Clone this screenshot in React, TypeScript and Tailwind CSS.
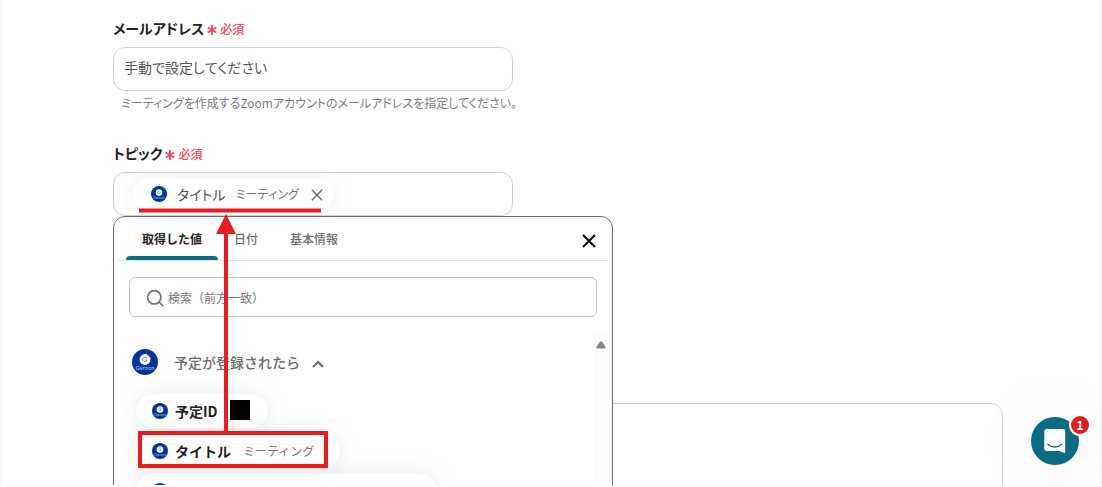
import React, { useState } from "react";

function GaroonLogo({ className }: { className: string }) {
  return (
    <svg viewBox="0 0 26 26" className={className} aria-hidden="true">
      <circle cx="13" cy="13" r="13" fill="#00349c" />
      <circle cx="13" cy="10.5" r="5.4" fill="#fff" />
      <path d="M14.700 9.100a2.200 2.200 0 1 0 .4 1.900h-1.800" fill="none" stroke="#5f80c4" strokeWidth="0.900" />
      <text x="13" y="20.6" fontSize="5.4" textAnchor="middle" fill="#a9bbe0" fontFamily="Inter, sans-serif">
        Garoon
      </text>
    </svg>
  );
}

function Cross({ className, width }: { className: string; width: number }) {
  return (
    <svg viewBox="0 0 14 14" className={className} fill="none" stroke="currentColor" strokeWidth={width} aria-hidden="true">
      <path d="M1 1l12 12M13 1L1 13" />
    </svg>
  );
}

function FieldLabel({ htmlFor, children }: { htmlFor: string; children: React.ReactNode }) {
  return (
    <label htmlFor={htmlFor} className="flex h-5 items-center text-sm font-bold text-[#222] [font-feature-settings:'palt']">
      {children}
      <svg viewBox="0 0 10 10" className="mt-1 ml-[3px] size-2.5" stroke="#ff4154" strokeWidth="1.8" fill="none" aria-hidden="true">
        <path d="M5 0v10M.7 2.5l8.6 5M9.3 2.5l-8.6 5" />
      </svg>
      <span className="mt-0.5 ml-[3px] text-xs font-medium text-[#ff4154]">必須</span>
    </label>
  );
}

const chipShadow = "shadow-[0_0_24px_rgba(0,0,0,0.08)]";

function ValueChip({ title, children }: { title: string; children?: React.ReactNode }) {
  return (
    <button
      type="button"
      className={`flex h-9 items-center rounded-full border border-[#f2f2f2] bg-white pr-[26px] pl-4 whitespace-nowrap ${chipShadow}`}
    >
      <GaroonLogo className="size-4 shrink-0" />
      <span className="ml-[7px] text-sm font-bold text-[#222]">{title}</span>
      {children}
    </button>
  );
}

const tabs = ["取得した値", "日付", "基本情報"];

function ValuePicker() {
  const [active, setActive] = useState(0);
  return (
    <section className="absolute top-full left-0 z-10 h-96 w-[500px] rounded-xl border border-[#6b6b6b] bg-white px-1">
      <div className="flex h-11 items-center border-b border-[#e2e2e2] pl-2">
        <div role="tablist" className="flex h-full">
          {tabs.map((tab, i) => (
            <button
              key={tab}
              type="button"
              role="tab"
              aria-selected={i === active}
              onClick={() => setActive(i)}
              className={
                i === active
                  ? "relative px-4 text-xs font-bold text-[#222] after:absolute after:inset-x-0 after:bottom-0 after:h-1 after:rounded-t after:bg-[#0a6c85]"
                  : "px-4 text-xs font-medium text-[#707070]"
              }
            >
              {tab}
            </button>
          ))}
        </div>
        <button type="button" aria-label="閉じる" className="mt-1 mr-3 ml-auto text-black">
          <Cross className="size-[14px]" width={2} />
        </button>
      </div>
      <div className="mx-[11px] mt-4 flex h-10 items-center rounded-md border border-[#c4c4c4] pl-4">
        <svg viewBox="0 0 18 18" className="mt-px size-[18px]" fill="none" stroke="#707070" strokeWidth="1.7" aria-hidden="true">
          <circle cx="8.3" cy="8.3" r="6.7" />
          <path d="M13 13l4 4" />
        </svg>
        <input
          type="search"
          aria-label="検索（前方一致）"
          placeholder="検索（前方一致）"
          className="mt-0.5 ml-1 min-w-0 flex-1 text-xs outline-none placeholder:text-[#757575]"
        />
      </div>
      <div className="mt-4 flex h-52 overflow-hidden">
        <div className="min-w-0 flex-1 pl-[14px]">
          <button type="button" aria-expanded="true" className="mt-4 flex h-[26px] items-center text-sm font-medium text-[#6b6b6b]">
            <GaroonLogo className="size-[26px]" />
            <span className="ml-4">予定が登録されたら</span>
            <svg viewBox="0 0 12 8" className="mt-1 ml-3 h-2 w-3" fill="none" stroke="currentColor" strokeWidth="2" aria-hidden="true">
              <path d="M1 7l5-5 5 5" />
            </svg>
          </button>
          <div className="mt-[18px] ml-[3px] flex flex-col items-start gap-1">
            <ValueChip title="予定ID">
              <span className="-mr-2 mb-0.5 ml-3 size-5 bg-black" />
            </ValueChip>
            <ValueChip title="タイトル">
              <span className="ml-3 text-xs text-[#757575]">ミーティング</span>
            </ValueChip>
            <ValueChip title="開始日時">
              <span className="ml-3 text-xs text-[#757575]">2025-01-01T00:00:00.00+09:00</span>
            </ValueChip>
          </div>
        </div>
        <div className="w-[14px] bg-[#fcfcfc] pt-2">
          <svg viewBox="0 0 10 8" className="mx-auto h-2 w-[10px]" fill="#858585" aria-hidden="true">
            <path d="M4 0.500h2L9.500 6v1.500H0.500V6z" />
          </svg>
        </div>
      </div>
    </section>
  );
}

function ArrowMark() {
  return (
    <svg
      viewBox="0 0 200 262"
      className="pointer-events-none absolute top-[34px] left-[22px] z-20 h-[262px] w-[200px]"
      fill="none"
      stroke="#e81b1e"
      aria-hidden="true"
    >
      <path d="M4 4.5L186 4.5" strokeWidth="4" />
      <path d="M91 24V227" strokeWidth="4" />
      <path d="M91 8l10 20H81z" fill="#e81b1e" stroke="none" />
      <rect x="5" y="227" width="186" height="33" strokeWidth="4" />
    </svg>
  );
}

function ChatLauncher() {
  return (
    <button
      type="button"
      aria-label="チャットを開く"
      className="absolute right-[23px] bottom-[22px] z-30 size-12 rounded-full bg-[#0a6c80] shadow-[0_0_60px_rgba(0,0,0,0.1)]"
    >
      <svg viewBox="0 0 24 26" className="absolute top-3 left-3 h-[26px] w-6" aria-hidden="true">
        <path
          d="M3.500 0h16.500a2.200 2.200 0 0 1 2.200 2.200V24.200l-6-2.200H3.500a2.200 2.200 0 0 1-2.200-2.200V2.200A2.200 2.200 0 0 1 3.500 0z"
          fill="#fff"
        />
        <path d="M4.800 15.200c4.300 3.400 9.700 3.400 14 0" fill="none" stroke="#0a6c80" strokeWidth="1.300" strokeLinecap="round" />
      </svg>
      <span className="absolute -top-px -right-[10px] flex size-[18px] items-center justify-center rounded-full bg-[#e02020] text-xs font-bold text-white ring-2 ring-[#fafafa]">
        1
      </span>
    </button>
  );
}

export default function App() {
  return (
    <div
      lang="ja"
      className="relative h-screen overflow-hidden bg-[#fbfbfb] px-px pb-0.5 font-['Noto_Sans_CJK_JP',sans-serif]"
    >
      <main className="h-full overflow-hidden border-x border-[#f0f0f0] bg-white pr-[97px] pl-[111px]">
        <div className="pt-[18px]">
          <FieldLabel htmlFor="email">メールアドレス</FieldLabel>
          <input
            id="email"
            type="text"
            placeholder="手動で設定してください"
            className="mt-[9px] block h-11 w-[400px] rounded-xl border border-[#cdd0da] px-[10px] pb-1 text-sm outline-none [font-feature-settings:'palt'] [font-kerning:none] placeholder:text-[#555]"
          />
          <p className="mt-1 ml-2 text-xs leading-4 text-[#777d85] [font-feature-settings:'palt']">
            ミーティングを作成するZoomアカウントのメールアドレスを指定してください。
          </p>
        </div>
        <div className="mt-8">
          <FieldLabel htmlFor="topic">トピック</FieldLabel>
          <div className="relative mt-[9px] w-[400px]">
            <div className="flex h-11 items-center overflow-hidden rounded-xl border border-[#cdd0da] pl-[18px] [font-feature-settings:'palt'] [font-kerning:none]">
              <div className={`flex h-8 items-center rounded-full border border-[#fafafa] bg-white pr-[10px] pl-[18px] whitespace-nowrap ${chipShadow}`}>
                <GaroonLogo className="size-4 shrink-0" />
                <span className="ml-[10px] text-sm text-[#555]">タイトル</span>
                <span className="ml-[10px] text-xs text-[#757575]">ミーティング</span>
                <button type="button" aria-label="削除" className="ml-3 pt-0.5 text-[#666]">
                  <Cross className="size-3" width={1.6} />
                </button>
              </div>
              <input id="topic" type="text" className="min-w-0 flex-1 outline-none" />
            </div>
            <ValuePicker />
            <ArrowMark />
          </div>
        </div>
        <textarea
          aria-label="説明"
          className="mt-[187px] block h-40 w-full resize-none rounded-xl border border-[#cfd0d6] outline-none"
        />
      </main>
      <ChatLauncher />
    </div>
  );
}
